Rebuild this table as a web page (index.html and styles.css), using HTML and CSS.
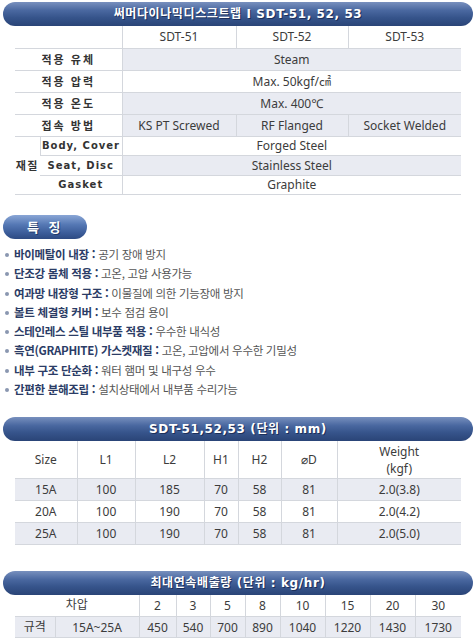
FILE: index.html
```html
<!DOCTYPE html>
<html lang="ko">
<head>
<meta charset="utf-8">
<title>SDT-51, 52, 53</title>
<link rel="stylesheet" href="styles.css">
</head>
<body>
<div class="page">
  <div class="bar">써머다이나믹디스크트랩 I SDT-51, 52, 53</div>
  <table class="spec">
    <colgroup><col class="c-a"><col class="c-b"><col class="c-v1"><col class="c-v2"><col class="c-v3"></colgroup>
    <tr class="head">
      <td colspan="2" class="lbl"></td><td>SDT-51</td><td>SDT-52</td><td>SDT-53</td>
    </tr>
    <tr class="grey">
      <td colspan="2" class="lbl">적용 유체</td><td colspan="3">Steam</td>
    </tr>
    <tr>
      <td colspan="2" class="lbl">적용 압력</td><td colspan="3">Max. 50kgf/㎠</td>
    </tr>
    <tr class="grey">
      <td colspan="2" class="lbl">적용 온도</td><td colspan="3">Max. 400℃</td>
    </tr>
    <tr class="grey">
      <td colspan="2" class="lbl">접속 방법</td><td>KS PT Screwed</td><td>RF Flanged</td><td>Socket Welded</td>
    </tr>
    <tr class="short">
      <td rowspan="3" class="lbl mat">재질</td><td class="lbl en">Body, Cover</td><td colspan="3">Forged Steel</td>
    </tr>
    <tr class="grey short">
      <td class="lbl en">Seat, Disc</td><td colspan="3">Stainless Steel</td>
    </tr>
    <tr class="short">
      <td class="lbl en">Gasket</td><td colspan="3">Graphite</td>
    </tr>
  </table>

  <div class="pill">특 징</div>
  <ul class="features">
    <li><b>바이메탈이 내장 :</b> 공기 장애 방지</li>
    <li><b>단조강 몸체 적용 :</b> 고온, 고압 사용가능</li>
    <li><b>여과망 내장형 구조 :</b> 이물질에 의한 기능장애 방지</li>
    <li><b>볼트 체결형 커버 :</b> 보수 점검 용이</li>
    <li><b>스테인레스 스틸 내부품 적용 :</b> 우수한 내식성</li>
    <li><b>흑연(GRAPHITE) 가스켓재질 :</b> 고온, 고압에서 우수한 기밀성</li>
    <li><b>내부 구조 단순화 :</b> 워터 햄머 및 내구성 우수</li>
    <li><b>간편한 분해조립 :</b> 설치상태에서 내부품 수리가능</li>
  </ul>

  <div class="bar">SDT-51,52,53 (단위 : mm)</div>
  <table class="dim">
    <colgroup><col class="d1"><col class="d2"><col class="d3"><col class="d4"><col class="d5"><col class="d6"><col class="d7"></colgroup>
    <tr class="head tall">
      <td>Size</td><td>L1</td><td>L2</td><td>H1</td><td>H2</td><td>⌀D</td><td>Weight<br>(kgf)</td>
    </tr>
    <tr class="grey"><td>15A</td><td>100</td><td>185</td><td>70</td><td>58</td><td>81</td><td>2.0(3.8)</td></tr>
    <tr><td>20A</td><td>100</td><td>190</td><td>70</td><td>58</td><td>81</td><td>2.0(4.2)</td></tr>
    <tr class="grey"><td>25A</td><td>100</td><td>190</td><td>70</td><td>58</td><td>81</td><td>2.0(5.0)</td></tr>
  </table>

  <div class="bar bar-low">최대연속배출량 (단위 : kg/hr)</div>
  <table class="flow">
    <colgroup><col class="f1"><col class="f2"><col class="f3"><col class="f4"><col class="f5"><col class="f6"><col class="f7"><col class="f8"><col class="f9"><col class="f10"></colgroup>
    <tr class="head">
      <td colspan="2" class="ko up">차압</td><td>2</td><td>3</td><td>5</td><td>8</td><td>10</td><td>15</td><td>20</td><td>30</td>
    </tr>
    <tr class="grey">
      <td class="ko up">규격</td><td>15A~25A</td><td>450</td><td>540</td><td>700</td><td>890</td><td>1040</td><td>1220</td><td>1430</td><td>1730</td>
    </tr>
  </table>
</div>
</body>
</html>
```

FILE: styles.css
```css
html, body {
  margin: 0;
  padding: 0;
  background: #ffffff;
}

.page {
  width: 475px;
  padding-top: 2px;
  font-family: "Noto Sans", "Noto Sans CJK KR", sans-serif;
  color: #3c3c3c;
}

.bar {
  margin: 0 2px 0 3px;
  height: 24px;
  border-radius: 12px;
  background: linear-gradient(#7890be 0%, #4a68a0 35%, #36548b 65%, #2a4477 100%);
  color: #ffffff;
  text-align: center;
  font-family: "DejaVu Sans", "Noto Sans CJK KR", sans-serif;
  font-weight: bold;
  font-size: 12px;
  line-height: 24px;
  letter-spacing: 0.6px;
  text-shadow: 1px 1px 0 #1c2f5a;
}

.bar-low {
  margin-top: 26px;
}

table {
  margin-left: 15px;
  width: 446px;
  border-collapse: collapse;
  table-layout: fixed;
  font-size: 12px;
}

td {
  padding: 0;
  text-align: center;
  border-bottom: 1px solid #d4d7dd;
  border-left: 1px solid #d4d7dd;
  color: #3c3c3c;
  white-space: nowrap;
}

td:first-child {
  border-left: none;
}

.spec tr {
  height: 22px;
}

.spec tr.short {
  height: 19.5px;
}

.spec .c-a { width: 25px; }
.spec .c-b { width: 82px; }
.spec .c-v1 { width: 114px; }
.spec .c-v2 { width: 112px; }
.spec .c-v3 { width: 113px; }

.spec tr.grey td:not(.lbl) {
  background: #e9ebf2;
}

.spec .lbl {
  font-family: "Noto Sans CJK KR", sans-serif;
  font-weight: bold;
  font-size: 11px;
  letter-spacing: 2px;
  color: #333333;
  background: #ffffff;
}

.spec .lbl.en {
  font-family: "DejaVu Sans", sans-serif;
  font-size: 10px;
  letter-spacing: 1px;
}

.spec .lbl.mat {
  letter-spacing: 1.5px;
}

.pill {
  margin: 20px 0 0 3px;
  width: 84px;
  height: 24px;
  border-radius: 12px;
  background: linear-gradient(#8aa6d6 0%, #5578b4 40%, #3b5c99 75%, #2d4a82 100%);
  color: #ffffff;
  font-family: "Noto Sans CJK KR", sans-serif;
  font-weight: bold;
  font-size: 13px;
  line-height: 24px;
  letter-spacing: 3px;
  padding-left: 24px;
  box-sizing: border-box;
  text-shadow: 1px 1px 0 #223a6b;
}

.features {
  list-style: none;
  margin: 6px 0 0 0;
  padding: 0 0 0 14px;
  font-family: "Noto Sans CJK KR", sans-serif;
  font-size: 11.5px;
  letter-spacing: -0.3px;
  line-height: 19.3px;
  color: #555555;
}

.features li {
  position: relative;
}

.features li::before {
  content: "";
  position: absolute;
  left: -9px;
  top: 8px;
  width: 4px;
  height: 4px;
  border-radius: 50%;
  background: #8a97b0;
}

.features b {
  color: #2b3c66;
  font-weight: bold;
}

.features + .bar {
  margin-top: 18px;
}

.dim .d1 { width: 62px; }
.dim .d2 { width: 58px; }
.dim .d3 { width: 69px; }
.dim .d4 { width: 34px; }
.dim .d5 { width: 43px; }
.dim .d6 { width: 56px; }
.dim .d7 { width: 124px; }

.dim tr {
  height: 22px;
}

.dim tr.tall {
  height: 37px;
}

.dim tr.tall td {
  line-height: 17px;
}

.grey td {
  background: #e9ebf2;
}

.flow .f1 { width: 40px; }
.flow .f2 { width: 84px; }
.flow .f3 { width: 37px; }
.flow .f4 { width: 34px; }
.flow .f5 { width: 35px; }
.flow .f6 { width: 35px; }
.flow .f7 { width: 45px; }
.flow .f8 { width: 45px; }
.flow .f9 { width: 45px; }
.flow .f10 { width: 46px; }

.flow tr {
  height: 21.5px;
}

.flow .ko {
  font-family: "Noto Sans CJK KR", sans-serif;
  font-size: 12px;
}

.flow .up {
  vertical-align: top;
  line-height: 17px;
}
```
